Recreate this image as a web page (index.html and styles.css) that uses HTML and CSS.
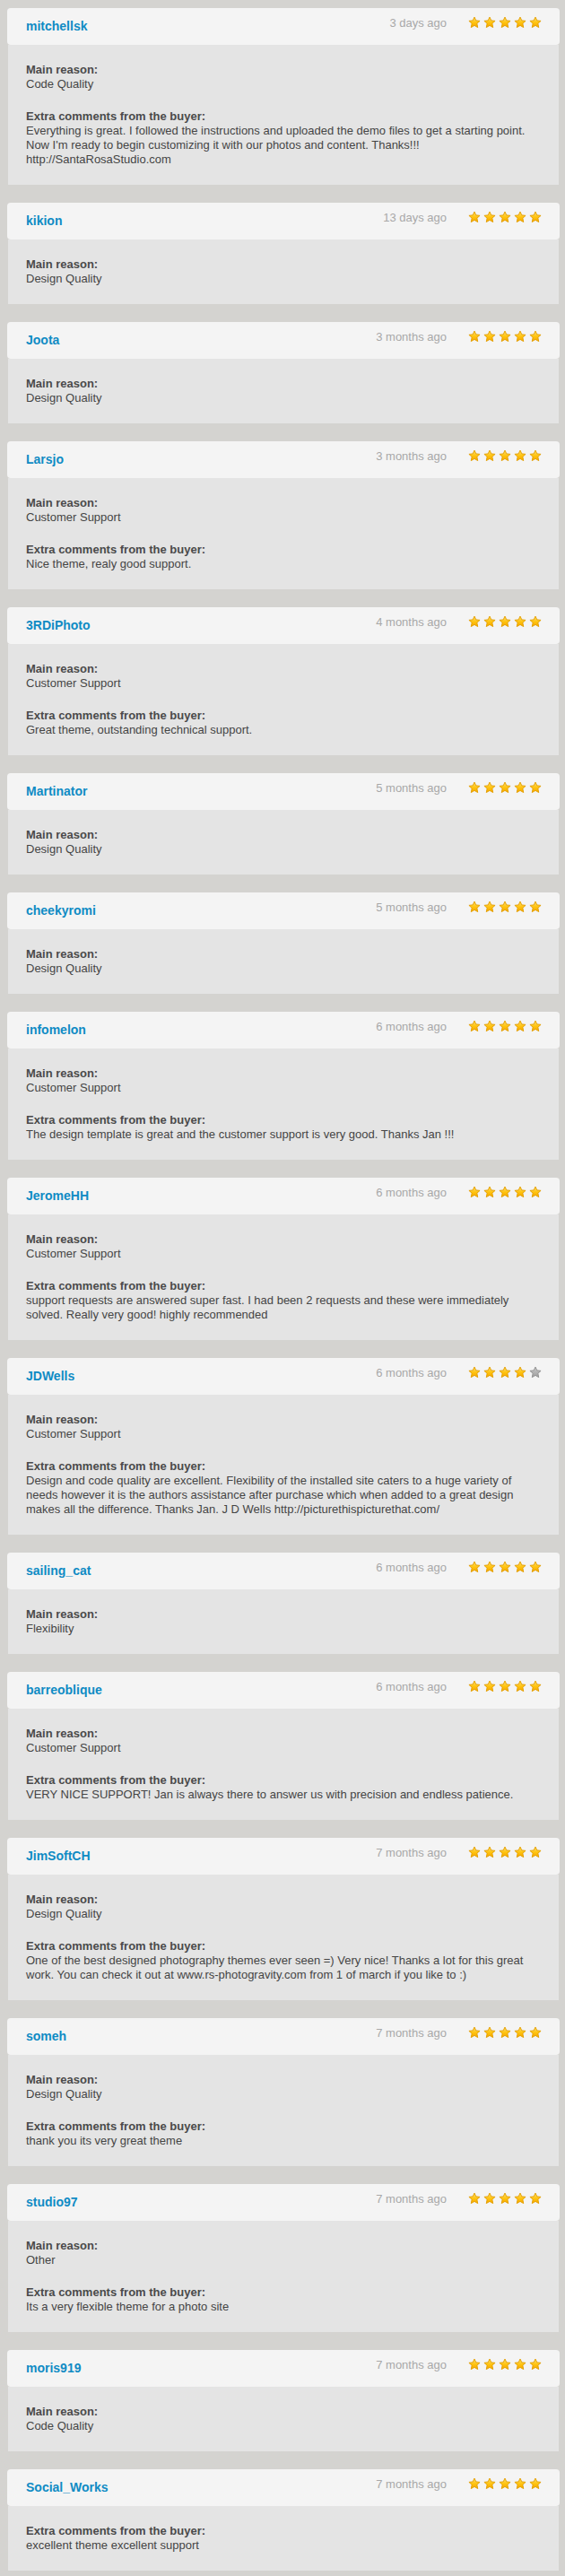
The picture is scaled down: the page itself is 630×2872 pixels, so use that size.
FILE: index.html
```html
<!DOCTYPE html>
<html lang="en">
<head>
<meta charset="utf-8">
<title>Reviews</title>
<link rel="stylesheet" href="styles.css">
</head>
<body>
<svg class="defs" width="0" height="0" aria-hidden="true">
  <defs>
    <linearGradient id="gold" x1="0" y1="0" x2="0" y2="1">
      <stop offset="0" stop-color="#ffe066"/>
      <stop offset="0.55" stop-color="#ffc20e"/>
      <stop offset="1" stop-color="#f5a800"/>
    </linearGradient>
    <linearGradient id="grey" x1="0" y1="0" x2="0" y2="1">
      <stop offset="0" stop-color="#c8c8c8"/>
      <stop offset="1" stop-color="#9e9e9e"/>
    </linearGradient>
    <symbol id="star" viewBox="0 0 24 24">
      <polygon points="12,1.8 15.1,8.4 22.4,9.2 16.9,14.1 18.4,21.6 12,17.8 5.6,21.6 7.1,14.1 1.6,9.2 8.9,8.4" stroke-width="1.6" stroke-linejoin="round"/>
    </symbol>
  </defs>
</svg>

<main class="reviews">

<article class="review">
  <header class="review-head"><span class="user">mitchellsk</span><span class="meta"><span class="date">3 days ago</span><span class="stars"><svg class="star on"><use href="#star"/></svg><svg class="star on"><use href="#star"/></svg><svg class="star on"><use href="#star"/></svg><svg class="star on"><use href="#star"/></svg><svg class="star on"><use href="#star"/></svg></span></span></header>
  <div class="review-body">
    <div class="sec"><div class="label">Main reason:</div><div class="text">Code Quality</div></div>
    <div class="sec"><div class="label">Extra comments from the buyer:</div><div class="text">Everything is great. I followed the instructions and uploaded the demo files to get a starting point. Now I'm ready to begin customizing it with our photos and content. Thanks!!! http://SantaRosaStudio.com</div></div>
  </div>
</article>

<article class="review">
  <header class="review-head"><span class="user">kikion</span><span class="meta"><span class="date">13 days ago</span><span class="stars"><svg class="star on"><use href="#star"/></svg><svg class="star on"><use href="#star"/></svg><svg class="star on"><use href="#star"/></svg><svg class="star on"><use href="#star"/></svg><svg class="star on"><use href="#star"/></svg></span></span></header>
  <div class="review-body">
    <div class="sec"><div class="label">Main reason:</div><div class="text">Design Quality</div></div>
  </div>
</article>

<article class="review">
  <header class="review-head"><span class="user">Joota</span><span class="meta"><span class="date">3 months ago</span><span class="stars"><svg class="star on"><use href="#star"/></svg><svg class="star on"><use href="#star"/></svg><svg class="star on"><use href="#star"/></svg><svg class="star on"><use href="#star"/></svg><svg class="star on"><use href="#star"/></svg></span></span></header>
  <div class="review-body">
    <div class="sec"><div class="label">Main reason:</div><div class="text">Design Quality</div></div>
  </div>
</article>

<article class="review">
  <header class="review-head"><span class="user">Larsjo</span><span class="meta"><span class="date">3 months ago</span><span class="stars"><svg class="star on"><use href="#star"/></svg><svg class="star on"><use href="#star"/></svg><svg class="star on"><use href="#star"/></svg><svg class="star on"><use href="#star"/></svg><svg class="star on"><use href="#star"/></svg></span></span></header>
  <div class="review-body">
    <div class="sec"><div class="label">Main reason:</div><div class="text">Customer Support</div></div>
    <div class="sec"><div class="label">Extra comments from the buyer:</div><div class="text">Nice theme, realy good support.</div></div>
  </div>
</article>

<article class="review">
  <header class="review-head"><span class="user">3RDiPhoto</span><span class="meta"><span class="date">4 months ago</span><span class="stars"><svg class="star on"><use href="#star"/></svg><svg class="star on"><use href="#star"/></svg><svg class="star on"><use href="#star"/></svg><svg class="star on"><use href="#star"/></svg><svg class="star on"><use href="#star"/></svg></span></span></header>
  <div class="review-body">
    <div class="sec"><div class="label">Main reason:</div><div class="text">Customer Support</div></div>
    <div class="sec"><div class="label">Extra comments from the buyer:</div><div class="text">Great theme, outstanding technical support.</div></div>
  </div>
</article>

<article class="review">
  <header class="review-head"><span class="user">Martinator</span><span class="meta"><span class="date">5 months ago</span><span class="stars"><svg class="star on"><use href="#star"/></svg><svg class="star on"><use href="#star"/></svg><svg class="star on"><use href="#star"/></svg><svg class="star on"><use href="#star"/></svg><svg class="star on"><use href="#star"/></svg></span></span></header>
  <div class="review-body">
    <div class="sec"><div class="label">Main reason:</div><div class="text">Design Quality</div></div>
  </div>
</article>

<article class="review">
  <header class="review-head"><span class="user">cheekyromi</span><span class="meta"><span class="date">5 months ago</span><span class="stars"><svg class="star on"><use href="#star"/></svg><svg class="star on"><use href="#star"/></svg><svg class="star on"><use href="#star"/></svg><svg class="star on"><use href="#star"/></svg><svg class="star on"><use href="#star"/></svg></span></span></header>
  <div class="review-body">
    <div class="sec"><div class="label">Main reason:</div><div class="text">Design Quality</div></div>
  </div>
</article>

<article class="review">
  <header class="review-head"><span class="user">infomelon</span><span class="meta"><span class="date">6 months ago</span><span class="stars"><svg class="star on"><use href="#star"/></svg><svg class="star on"><use href="#star"/></svg><svg class="star on"><use href="#star"/></svg><svg class="star on"><use href="#star"/></svg><svg class="star on"><use href="#star"/></svg></span></span></header>
  <div class="review-body">
    <div class="sec"><div class="label">Main reason:</div><div class="text">Customer Support</div></div>
    <div class="sec"><div class="label">Extra comments from the buyer:</div><div class="text">The design template is great and the customer support is very good. Thanks Jan !!!</div></div>
  </div>
</article>

<article class="review">
  <header class="review-head"><span class="user">JeromeHH</span><span class="meta"><span class="date">6 months ago</span><span class="stars"><svg class="star on"><use href="#star"/></svg><svg class="star on"><use href="#star"/></svg><svg class="star on"><use href="#star"/></svg><svg class="star on"><use href="#star"/></svg><svg class="star on"><use href="#star"/></svg></span></span></header>
  <div class="review-body">
    <div class="sec"><div class="label">Main reason:</div><div class="text">Customer Support</div></div>
    <div class="sec"><div class="label">Extra comments from the buyer:</div><div class="text">support requests are answered super fast. I had been 2 requests and these were immediately solved. Really very good! highly recommended</div></div>
  </div>
</article>

<article class="review">
  <header class="review-head"><span class="user">JDWells</span><span class="meta"><span class="date">6 months ago</span><span class="stars"><svg class="star on"><use href="#star"/></svg><svg class="star on"><use href="#star"/></svg><svg class="star on"><use href="#star"/></svg><svg class="star on"><use href="#star"/></svg><svg class="star off"><use href="#star"/></svg></span></span></header>
  <div class="review-body">
    <div class="sec"><div class="label">Main reason:</div><div class="text">Customer Support</div></div>
    <div class="sec"><div class="label">Extra comments from the buyer:</div><div class="text">Design and code quality are excellent. Flexibility of the installed site caters to a huge variety of needs however it is the authors assistance after purchase which when added to a great design makes all the difference. Thanks Jan. J D Wells http://picturethispicturethat.com/</div></div>
  </div>
</article>

<article class="review">
  <header class="review-head"><span class="user">sailing_cat</span><span class="meta"><span class="date">6 months ago</span><span class="stars"><svg class="star on"><use href="#star"/></svg><svg class="star on"><use href="#star"/></svg><svg class="star on"><use href="#star"/></svg><svg class="star on"><use href="#star"/></svg><svg class="star on"><use href="#star"/></svg></span></span></header>
  <div class="review-body">
    <div class="sec"><div class="label">Main reason:</div><div class="text">Flexibility</div></div>
  </div>
</article>

<article class="review">
  <header class="review-head"><span class="user">barreoblique</span><span class="meta"><span class="date">6 months ago</span><span class="stars"><svg class="star on"><use href="#star"/></svg><svg class="star on"><use href="#star"/></svg><svg class="star on"><use href="#star"/></svg><svg class="star on"><use href="#star"/></svg><svg class="star on"><use href="#star"/></svg></span></span></header>
  <div class="review-body">
    <div class="sec"><div class="label">Main reason:</div><div class="text">Customer Support</div></div>
    <div class="sec"><div class="label">Extra comments from the buyer:</div><div class="text">VERY NICE SUPPORT! Jan is always there to answer us with precision and endless patience.</div></div>
  </div>
</article>

<article class="review">
  <header class="review-head"><span class="user">JimSoftCH</span><span class="meta"><span class="date">7 months ago</span><span class="stars"><svg class="star on"><use href="#star"/></svg><svg class="star on"><use href="#star"/></svg><svg class="star on"><use href="#star"/></svg><svg class="star on"><use href="#star"/></svg><svg class="star on"><use href="#star"/></svg></span></span></header>
  <div class="review-body">
    <div class="sec"><div class="label">Main reason:</div><div class="text">Design Quality</div></div>
    <div class="sec"><div class="label">Extra comments from the buyer:</div><div class="text">One of the best designed photography themes ever seen =) Very nice! Thanks a lot for this great work. You can check it out at www.rs-photogravity.com from 1 of march if you like to :)</div></div>
  </div>
</article>

<article class="review">
  <header class="review-head"><span class="user">someh</span><span class="meta"><span class="date">7 months ago</span><span class="stars"><svg class="star on"><use href="#star"/></svg><svg class="star on"><use href="#star"/></svg><svg class="star on"><use href="#star"/></svg><svg class="star on"><use href="#star"/></svg><svg class="star on"><use href="#star"/></svg></span></span></header>
  <div class="review-body">
    <div class="sec"><div class="label">Main reason:</div><div class="text">Design Quality</div></div>
    <div class="sec"><div class="label">Extra comments from the buyer:</div><div class="text">thank you its very great theme</div></div>
  </div>
</article>

<article class="review">
  <header class="review-head"><span class="user">studio97</span><span class="meta"><span class="date">7 months ago</span><span class="stars"><svg class="star on"><use href="#star"/></svg><svg class="star on"><use href="#star"/></svg><svg class="star on"><use href="#star"/></svg><svg class="star on"><use href="#star"/></svg><svg class="star on"><use href="#star"/></svg></span></span></header>
  <div class="review-body">
    <div class="sec"><div class="label">Main reason:</div><div class="text">Other</div></div>
    <div class="sec"><div class="label">Extra comments from the buyer:</div><div class="text">Its a very flexible theme for a photo site</div></div>
  </div>
</article>

<article class="review">
  <header class="review-head"><span class="user">moris919</span><span class="meta"><span class="date">7 months ago</span><span class="stars"><svg class="star on"><use href="#star"/></svg><svg class="star on"><use href="#star"/></svg><svg class="star on"><use href="#star"/></svg><svg class="star on"><use href="#star"/></svg><svg class="star on"><use href="#star"/></svg></span></span></header>
  <div class="review-body">
    <div class="sec"><div class="label">Main reason:</div><div class="text">Code Quality</div></div>
  </div>
</article>

<article class="review">
  <header class="review-head"><span class="user">Social_Works</span><span class="meta"><span class="date">7 months ago</span><span class="stars"><svg class="star on"><use href="#star"/></svg><svg class="star on"><use href="#star"/></svg><svg class="star on"><use href="#star"/></svg><svg class="star on"><use href="#star"/></svg><svg class="star on"><use href="#star"/></svg></span></span></header>
  <div class="review-body">
    <div class="sec"><div class="label">Extra comments from the buyer:</div><div class="text">excellent theme excellent support</div></div>
  </div>
</article>

</main>
</body>
</html>
```

FILE: styles.css
```css
html {
  background: #d4d3d0;
}

body {
  margin: 9px 6px 0 8px;
  font-family: "Liberation Sans", Arial, sans-serif;
  font-size: 13px;
  line-height: 16px;
  color: #454545;
}

.defs {
  position: absolute;
  width: 0;
  height: 0;
  overflow: hidden;
}

.reviews {
  display: flex;
  flex-direction: column;
  gap: 20px;
}

.review {
  display: flex;
  flex-direction: column;
}

.review-head {
  display: flex;
  justify-content: space-between;
  align-items: flex-start;
  height: 41px;
  box-sizing: border-box;
  padding: 0 20px 0 21px;
  background: #f4f4f4;
  border-radius: 4px;
}

.user {
  margin-top: 12px;
  font-size: 14px;
  font-weight: bold;
  color: #0f8bc4;
}

.meta {
  display: flex;
  align-items: flex-start;
  gap: 24px;
  margin-top: 9px;
}

.date {
  color: #a8a8a8;
}

.stars {
  display: flex;
  gap: 3px;
}

.star {
  width: 14px;
  height: 14px;
  display: block;
}

.star.on {
  fill: url(#gold);
  stroke: #e39d00;
}

.star.off {
  fill: url(#grey);
  stroke: #8f8f8f;
}

.review-body {
  margin: 0 1px;
  padding: 20px;
  background: #e4e4e4;
  display: flex;
  flex-direction: column;
  gap: 20px;
}

.label {
  font-weight: bold;
  color: #4a4a4a;
}
```
